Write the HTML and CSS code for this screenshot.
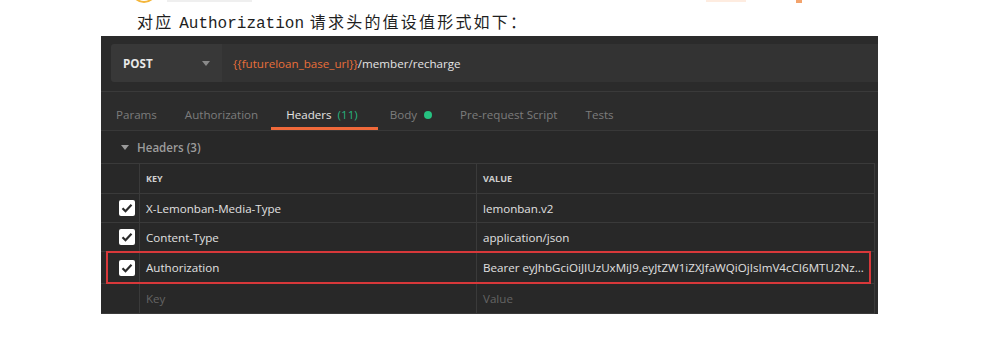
FILE: index.html
```html
<!DOCTYPE html>
<html lang="zh-CN">
<head>
<meta charset="utf-8">
<title>Authorization</title>
<link rel="stylesheet" href="styles.css">
</head>
<body>
<div class="prev">
  <span class="prev-icon"></span>
  <span class="prev-bar"></span>
  <span class="prev-mark light"></span>
  <span class="prev-mark"></span>
</div>
<p class="caption">对应 <code>Authorization</code> 请求头的值设值形式如下：</p>
<div class="panel">
  <div class="urlbar">
    <div class="method">
      <span>POST</span>
      <svg class="caret" width="8" height="5" viewBox="0 0 8 5"><path d="M0 0h8L4 5z" fill="#8a8a8a"/></svg>
    </div>
    <div class="url"><span class="var">{{futureloan_base_url}}</span>/member/recharge</div>
  </div>
  <div class="tabs">
    <span class="tab">Params</span>
    <span class="tab">Authorization</span>
    <span class="tab active">Headers <span class="count">(11)</span></span>
    <span class="tab">Body <span class="dot"></span></span>
    <span class="tab">Pre-request Script</span>
    <span class="tab">Tests</span>
  </div>
  <div class="section">
    <svg class="tri" width="8" height="5" viewBox="0 0 8 5"><path d="M0 0h8L4 5z" fill="#9a9a9a"/></svg>
    <span>Headers (3)</span>
  </div>
  <div class="table">
    <div class="row head">
      <div class="c-chk"></div>
      <div class="c-key">KEY</div>
      <div class="c-val">VALUE</div>
    </div>
    <div class="row">
      <div class="c-chk"><span class="chk"><svg width="12" height="10" viewBox="0 0 12 10"><path d="M1.5 5.2l3 3 6-6.5" fill="none" stroke="#2a2a2a" stroke-width="2.2"/></svg></span></div>
      <div class="c-key">X-Lemonban-Media-Type</div>
      <div class="c-val">lemonban.v2</div>
    </div>
    <div class="row">
      <div class="c-chk"><span class="chk"><svg width="12" height="10" viewBox="0 0 12 10"><path d="M1.5 5.2l3 3 6-6.5" fill="none" stroke="#2a2a2a" stroke-width="2.2"/></svg></span></div>
      <div class="c-key">Content-Type</div>
      <div class="c-val">application/json</div>
    </div>
    <div class="row hl">
      <div class="c-chk"><span class="chk"><svg width="12" height="10" viewBox="0 0 12 10"><path d="M1.5 5.2l3 3 6-6.5" fill="none" stroke="#2a2a2a" stroke-width="2.2"/></svg></span></div>
      <div class="c-key">Authorization</div>
      <div class="c-val">Bearer eyJhbGciOiJIUzUxMiJ9.eyJtZW1iZXJfaWQiOjIsImV4cCI6MTU2Nz...</div>
      <div class="redbox"></div>
    </div>
    <div class="row ph">
      <div class="c-chk"></div>
      <div class="c-key">Key</div>
      <div class="c-val">Value</div>
    </div>
  </div>
</div>
</body>
</html>
```
FILE: styles.css
```css
html, body {
  margin: 0;
  padding: 0;
  background: #ffffff;
}
body {
  width: 985px;
  height: 352px;
  overflow: hidden;
  font-family: "Open Sans", "Noto Sans", sans-serif;
}
.prev {
  display: flex;
  align-items: flex-end;
  height: 4px;
  overflow: hidden;
}
.prev-icon {
  flex: none;
  width: 26px;
  height: 26px;
  margin-left: 131px;
  margin-bottom: 1px;
  border: 2px solid #f4b63a;
  border-radius: 50%;
  box-sizing: border-box;
}
.prev-bar {
  align-self: flex-start;
  width: 85px;
  height: 2px;
  margin-left: 10px;
  background: #efefef;
}
.prev-mark {
  align-self: flex-start;
  width: 6px;
  height: 3px;
  margin-left: 50px;
  background: #f3a36c;
}
.prev-mark.light {
  width: 40px;
  height: 2px;
  margin-left: 454px;
  background: #feece0;
}
.caption {
  margin: 0;
  height: 32px;
  padding: 2px 0 0 137px;
  box-sizing: border-box;
  font-family: "Noto Sans CJK SC", sans-serif;
  font-size: 16px;
  line-height: 30px;
  letter-spacing: 2.2px;
  color: #1e1e1e;
}
.caption code {
  font-family: "Liberation Mono", monospace;
  font-size: 16px;
  letter-spacing: 0;
}
.panel {
  margin-left: 101px;
  width: 777px;
  height: 278px;
  background: #2b2b2b;
  color: #dcdcdc;
  font-size: 11.6px;
}
.urlbar {
  height: 56px;
  box-sizing: border-box;
  padding: 8px 0 0 10px;
  border-bottom: 1px solid #3a3a3a;
  display: flex;
  align-items: flex-start;
}
.method {
  width: 111px;
  height: 38px;
  box-sizing: border-box;
  background: #383838;
  border-radius: 3px 0 0 3px;
  display: flex;
  align-items: center;
  justify-content: space-between;
  padding: 0 12px 0 12px;
  font-weight: 700;
  font-size: 11.6px;
  color: #e8e8e8;
}
.caret { margin-top: 1px; }
.url {
  flex: 1;
  height: 38px;
  background: #333333;
  display: flex;
  align-items: center;
  padding-left: 11px;
  font-size: 11.6px;
  color: #e4e4e4;
}
.var { color: #e86f3a; }
.tabs {
  height: 39px;
  box-sizing: border-box;
  border-bottom: 1px solid #383838;
  display: flex;
  align-items: stretch;
  padding-left: 15px;
  gap: 28px;
  background: #2c2c2c;
}
.tab {
  display: flex;
  align-items: center;
  padding-top: 7px;
  font-size: 11.6px;
  color: #7c7c7c;
  white-space: pre;
}
.tab.active {
  color: #e4e4e4;
  border-bottom: 3px solid #f0693a;
  padding: 10px 20px 0 15px;
  margin: 0 -16px 0 -15px;
}
.count { color: #27b47e; margin-left: 3px; }
.dot {
  width: 8px;
  height: 8px;
  border-radius: 50%;
  background: #26c281;
  margin-left: 4px;
}
.section {
  height: 32px;
  display: flex;
  align-items: center;
  padding-left: 20px;
  font-size: 11.6px;
  font-weight: 600;
  color: #9c9c9c;
  background: #282828;
}
.tri { margin-right: 8px; }
.table {
  width: 774px;
  border-top: 1px solid #3a3a3a;
  border-right: 1px solid #3a3a3a;
  box-sizing: border-box;
  background: #282828;
}
.row {
  display: flex;
  height: 29px;
  border-bottom: 1px solid #3a3a3a;
  box-sizing: border-box;
  position: relative;
}
.row.head { height: 30px; }
.row.hl { height: 32px; }
.row.ph { height: 30px; }
.c-chk {
  width: 39px;
  border-right: 1px solid #3a3a3a;
  display: flex;
  align-items: center;
  justify-content: flex-end;
  padding-right: 4px;
  box-sizing: border-box;
}
.c-key {
  width: 337px;
  border-right: 1px solid #3a3a3a;
  display: flex;
  align-items: center;
  padding-left: 6px;
  box-sizing: border-box;
  font-size: 11.6px;
  color: #e0e0e0;
}
.c-val {
  flex: 1;
  display: flex;
  align-items: center;
  padding-left: 6px;
  font-size: 11.6px;
  color: #e0e0e0;
  white-space: nowrap;
  overflow: hidden;
}
.head .c-key, .head .c-val {
  font-size: 9px;
  font-weight: 700;
  color: #cfcfcf;
}
.ph .c-key, .ph .c-val { color: #646464; }
.chk {
  width: 16px;
  height: 16px;
  background: #ffffff;
  border-radius: 2px;
  display: flex;
  align-items: center;
  justify-content: center;
}
.redbox {
  position: absolute;
  left: 5px;
  right: 3px;
  top: -1px;
  bottom: -1px;
  border: 2px solid #d8383a;
  pointer-events: none;
}
```
